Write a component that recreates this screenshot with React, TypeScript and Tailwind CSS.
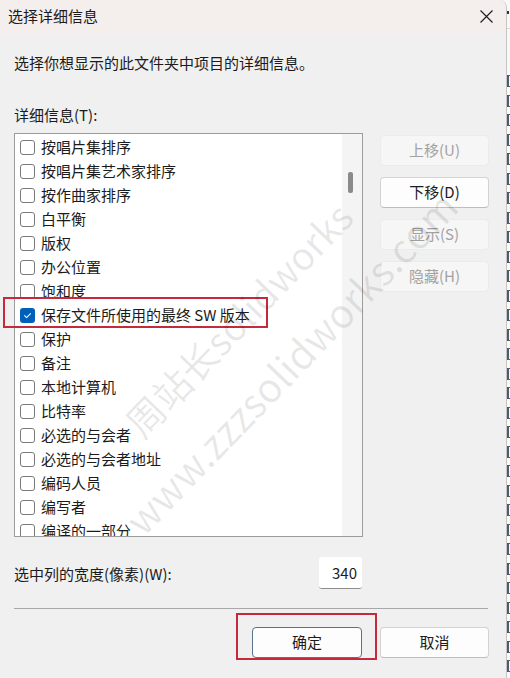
import React from "react";

const items: { label: string; checked?: boolean }[] = [
  { label: "按唱片集排序" },
  { label: "按唱片集艺术家排序" },
  { label: "按作曲家排序" },
  { label: "白平衡" },
  { label: "版权" },
  { label: "办公位置" },
  { label: "饱和度" },
  { label: "保存文件所使用的最终 SW 版本", checked: true },
  { label: "保护" },
  { label: "备注" },
  { label: "本地计算机" },
  { label: "比特率" },
  { label: "必选的与会者" },
  { label: "必选的与会者地址" },
  { label: "编码人员" },
  { label: "编写者" },
  { label: "编译的一部分" },
];

function Checkbox({ checked }: { checked?: boolean }) {
  if (checked) {
    return (
      <span className="flex h-[15px] w-[15px] shrink-0 items-center justify-center rounded-[3px] bg-[#005fb8]">
        <svg width="9" height="9" viewBox="0 0 10 10" fill="none">
          <path d="M1.8 5.2 L4 7.3 L8.3 2.8" stroke="white" strokeWidth="1.2" strokeLinecap="round" strokeLinejoin="round" />
        </svg>
      </span>
    );
  }
  return <span className="h-[15px] w-[15px] shrink-0 rounded-[3px] border border-[#7b7b7b] bg-white" />;
}

function SideButton({ label, enabled }: { label: string; enabled?: boolean }) {
  return enabled ? (
    <div className="flex h-[31px] w-[109px] items-center justify-center rounded-[4px] border border-[#d3d3d3] border-b-[#bdbdbd] bg-[#fdfdfd] text-[15px] text-[#1b1b1b]">
      {label}
    </div>
  ) : (
    <div className="flex h-[31px] w-[109px] items-center justify-center rounded-[4px] border border-[#ebebeb] bg-[#f6f6f6] text-[15px] text-[#a2a2a2]">
      {label}
    </div>
  );
}

export default function App() {
  const marks = Array.from({ length: 31 });
  return (
    <div className="flex h-[678px] w-[510px] overflow-hidden bg-[#f7f7f7] font-['Noto_Sans_CJK_SC',sans-serif] text-[#1b1b1b]">
      <div className="relative flex h-full w-[507px] shrink-0 flex-col overflow-hidden rounded-tr-[8px] border-r border-[#c4c4c4] bg-[#f0f0f0]">
        {/* title bar */}
        <div className="flex h-[33px] shrink-0 items-center justify-between bg-[#f4eeed] pl-[8px] pr-[13px]">
          <span className="text-[15px] leading-[20px] mt-[-2px]">选择详细信息</span>
          <svg width="13" height="13" viewBox="0 0 13 13" className="mt-[-1px]">
            <path d="M0.5 0.5 L12.5 12.5 M12.5 0.5 L0.5 12.5" stroke="#1b1b1b" strokeWidth="1.1" />
          </svg>
        </div>

        <div className="flex flex-col pl-[14px]">
          <p className="mt-[20px] text-[15px] leading-[20px]">选择你想显示的此文件夹中项目的详细信息。</p>
          <p className="mt-[32px] text-[15px] leading-[20px]">详细信息(T):</p>

          <div className="mt-[8px] flex">
            {/* list */}
            <div className="flex h-[404px] w-[349px] overflow-hidden border border-[#9c9c9c] bg-white">
              <div className="flex flex-1 flex-col pt-[1px]">
                {items.map((it) => (
                  <div key={it.label} className="flex h-[24px] shrink-0 items-center gap-[6px] pl-[5px]">
                    <Checkbox checked={it.checked} />
                    <span className="whitespace-nowrap text-[15px] leading-[20px]">{it.label}</span>
                  </div>
                ))}
              </div>
              <div className="w-[20px] shrink-0 bg-[#f4f4f4] pt-[38px] pl-[6px]">
                <div className="h-[21px] w-[5px] rounded-[2px] bg-[#8a8a8a]" />
              </div>
            </div>

            {/* side buttons */}
            <div className="ml-[17px] flex flex-col gap-[11px] pt-[2px]">
              <SideButton label="上移(U)" />
              <SideButton label="下移(D)" enabled />
              <SideButton label="显示(S)" />
              <SideButton label="隐藏(H)" />
            </div>
          </div>

          {/* width row */}
          <div className="mt-[21px] flex h-[32px] w-[348px] items-center justify-between">
            <span className="text-[15px] leading-[20px]">选中列的宽度(像素)(W):</span>
            <div className="flex h-[32px] w-[43px] items-center justify-end rounded-[3px] border-b border-[#8c8c8c] bg-white pr-[5px] text-[15px] leading-[20px] mt-[-2px]">
              340
            </div>
          </div>

          <div className="mt-[18px] h-px w-[474px] bg-[#a8a8a8]" />

          <div className="mt-[18px] flex gap-[18px] pl-[238px]">
            <div className="flex h-[31px] w-[110px] items-center justify-center rounded-[4px] border border-[#5a7290] bg-[#fdfdfd] text-[15px]">
              确定
            </div>
            <div className="flex h-[31px] w-[109px] items-center justify-center rounded-[4px] border border-[#d3d3d3] border-b-[#bdbdbd] bg-[#fdfdfd] text-[15px]">
              取消
            </div>
          </div>
        </div>

        {/* annotation boxes */}
        <div className="pointer-events-none absolute left-[3px] top-[297px] h-[31px] w-[265px] border-2 border-[#c42a3b]" />
        <div className="pointer-events-none absolute left-[236px] top-[613px] h-[47px] w-[141px] border-2 border-[#c42a3b]" />

        {/* watermark */}
        <div className="pointer-events-none absolute left-[238px] top-[319px] -translate-x-1/2 -translate-y-1/2 -rotate-[46deg] whitespace-nowrap text-[38px] leading-[44px] text-[rgba(0,0,0,0.09)]">
          周站长solidworks
        </div>
        <div className="pointer-events-none absolute left-[290px] top-[362px] -translate-x-1/2 -translate-y-1/2 -rotate-[46deg] whitespace-nowrap text-[40px] leading-[46px] text-[rgba(0,0,0,0.09)]">
          www.zzzsolidworks.com
        </div>
      </div>

      {/* background window strip */}
      <div className="flex flex-1 flex-col bg-[#f9f9f9]">
        <div className="mt-[11px] h-[3px] w-[2px] bg-[#333]" />
        <div className="mt-[14px] h-px w-full bg-[#d6d6d6]" />
        <div className="flex flex-col gap-[7.5px] pt-[46px]">
          {marks.map((_, i) => (
            <div key={i} className="h-[12px] w-[3px] border-y border-l-2 border-[#4d5b70]" />
          ))}
        </div>
      </div>
    </div>
  );
}
